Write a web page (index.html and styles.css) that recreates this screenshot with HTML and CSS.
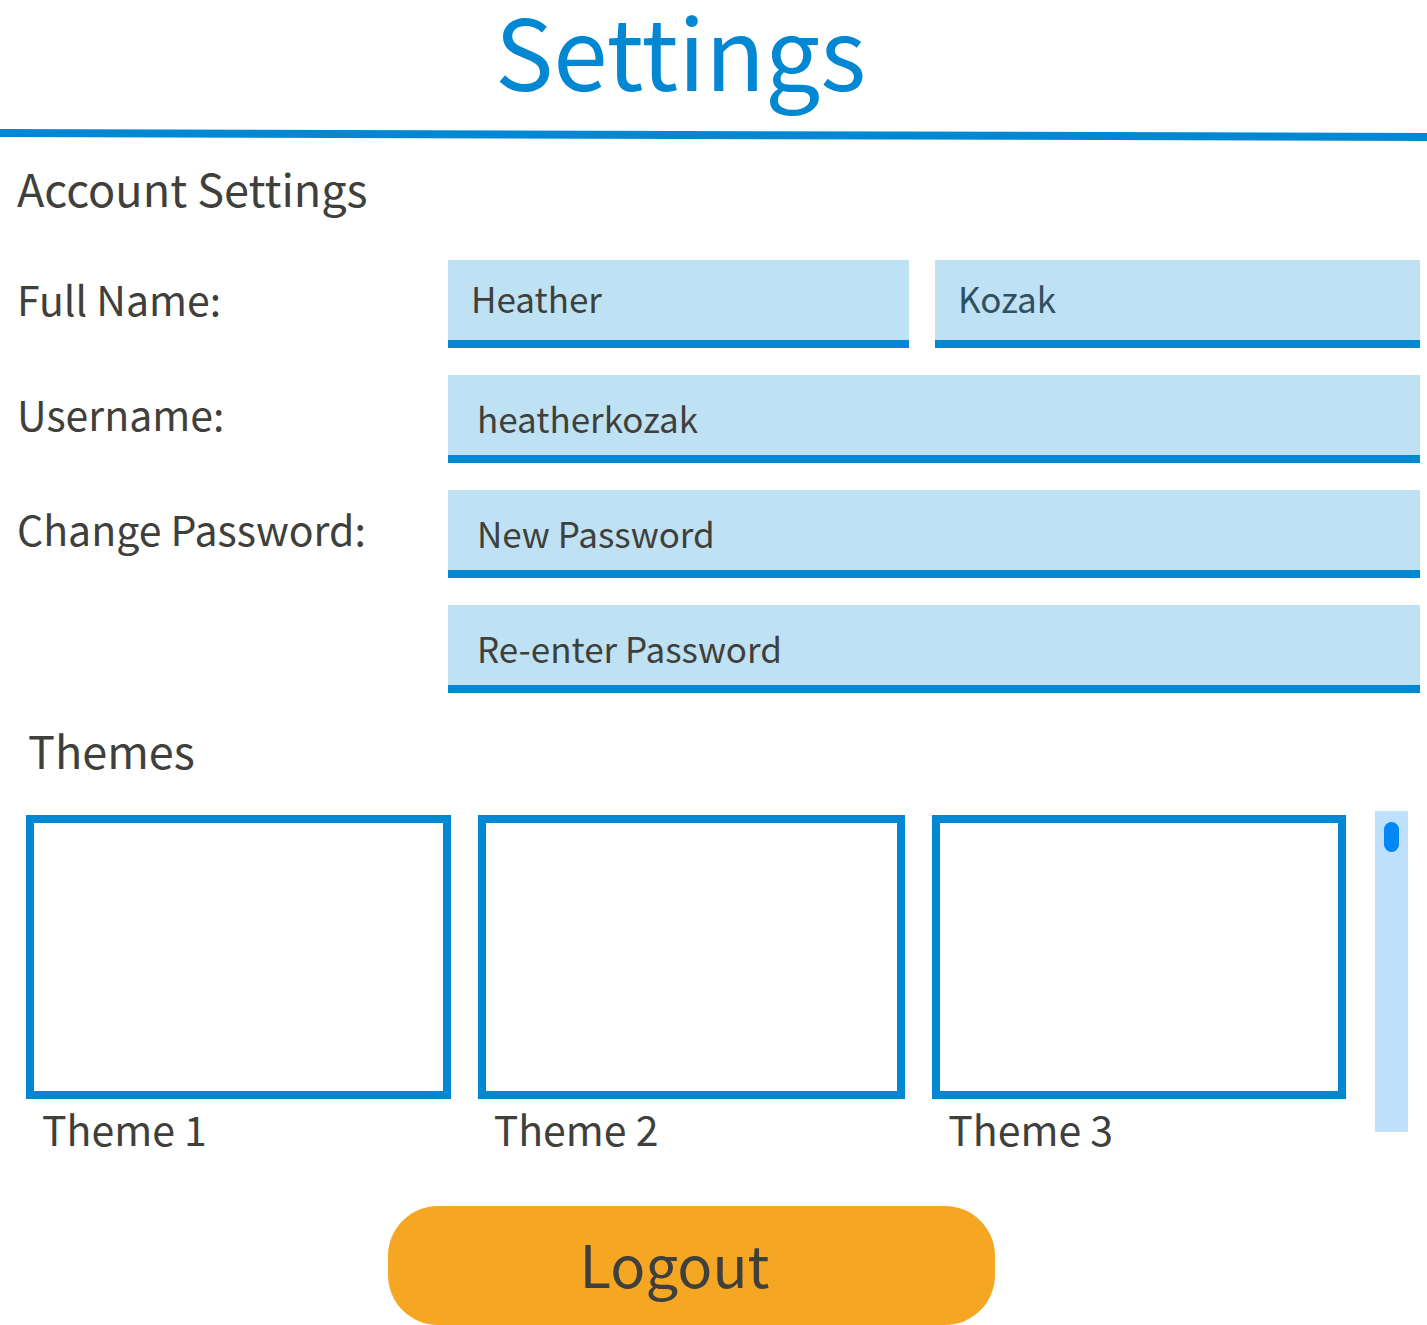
FILE: index.html
```html
<!DOCTYPE html>
<html lang="en">
<head>
<meta charset="utf-8">
<meta name="viewport" content="width=device-width, initial-scale=1">
<title>Settings</title>
<link rel="stylesheet" href="styles.css">
</head>
<body>
<header class="page-header">
  <h1 class="page-title">Settings</h1>
  <div class="header-rule"></div>
</header>
<main>
  <section class="account">
    <h2 class="section-title">Account Settings</h2>
    <form class="account-form">
      <div class="row">
        <label class="row-label" for="first-name">Full Name:</label>
        <div class="name-fields">
          <input class="field field-short" id="first-name" type="text" value="Heather">
          <input class="field field-short field-last" id="last-name" type="text" aria-label="Last name" value="Kozak">
        </div>
      </div>
      <div class="row">
        <label class="row-label" for="username">Username:</label>
        <input class="field" id="username" type="text" value="heatherkozak">
      </div>
      <div class="row">
        <label class="row-label" for="new-password">Change Password:</label>
        <input class="field" id="new-password" type="password" placeholder="New Password">
      </div>
      <div class="row">
        <span></span>
        <input class="field" id="repeat-password" type="password" aria-label="Re-enter Password" placeholder="Re-enter Password">
      </div>
    </form>
  </section>
  <section class="themes">
    <h2 class="section-title themes-title">Themes</h2>
    <div class="themes-body">
      <div class="theme-list">
        <figure class="theme"><div class="theme-preview"></div><figcaption class="theme-name">Theme 1</figcaption></figure>
        <figure class="theme"><div class="theme-preview"></div><figcaption class="theme-name">Theme 2</figcaption></figure>
        <figure class="theme"><div class="theme-preview"></div><figcaption class="theme-name">Theme 3</figcaption></figure>
      </div>
      <div class="scroll-track"><div class="scroll-thumb"></div></div>
    </div>
  </section>
  <div class="actions">
    <button class="logout" type="button">Logout</button>
  </div>
</main>
</body>
</html>
```
FILE: styles.css
```css
* {
  box-sizing: border-box;
}

body {
  margin: 0;
  background: #fff;
  color: #3f3f3b;
  font-family: "Noto Sans CJK SC", "Noto Sans", sans-serif;
  font-weight: 400;
}

h1, h2, figure {
  margin: 0;
  font-weight: 400;
}

.page-title {
  padding: 0 66px 33px 0;
  color: #0288d3;
  font-size: 98px;
  line-height: 96px;
  text-align: center;
}

/* The rule drops slightly from left to right. */
.header-rule {
  height: 12px;
  background: #0288d3;
  clip-path: polygon(0 0, 100% 4px, 100% 100%, 0 8px);
}

.section-title {
  padding-left: 17px;
  font-size: 45px;
  line-height: 60px;
}

.account {
  padding-top: 17px;
}

.account-form {
  display: grid;
  gap: 27px;
  padding: 42px 7px 0 0;
}

.row {
  display: grid;
  grid-template-columns: 448fr 972fr;
}

.row-label {
  padding: 8px 0 0 17px;
  font-size: 41px;
  line-height: 60px;
}

.name-fields {
  display: grid;
  grid-template-columns: 461fr 485fr;
  gap: 26px;
}

.field {
  width: 100%;
  min-width: 0;
  height: 88px;
  margin: 0;
  padding: 4px 29px 0;
  border: 0;
  border-bottom: 8px solid #0288d3;
  border-radius: 0;
  background: #bfe1f4;
  color: #3f3f3b;
  font: inherit;
  font-size: 35px;
  line-height: 56px;
  outline: 0;
}

.field::placeholder {
  color: #3f3f3b;
  opacity: 1;
}

.field-short {
  padding: 0 23px 6px;
}

.field-last {
  color: #2f4f62;
}

.themes {
  padding-top: 27px;
}

.themes-title {
  padding-left: 28px;
}

.themes-body {
  display: flex;
  gap: 29px;
  padding: 31px 19px 0 26px;
}

.theme-list {
  flex: 1;
  display: grid;
  grid-template-columns: 425fr 428fr 414fr;
  gap: 27px;
  padding-top: 4px;
}

.theme-preview {
  height: 284px;
  border: 8px solid #0288d3;
}

.theme-name {
  padding-left: 16px;
  font-size: 41px;
  line-height: 58px;
}

.scroll-track {
  width: 33px;
  height: 321px;
  padding: 11px 9px;
  background: #bfe1fc;
}

.scroll-thumb {
  width: 15px;
  height: 30px;
  border-radius: 8px;
  background: #0288f5;
}

.actions {
  display: flex;
  justify-content: center;
  padding: 49px 44px 0 0;
}

.logout {
  width: 607px;
  height: 119px;
  padding: 0 34px 6px 0;
  border: 0;
  border-radius: 50px;
  background: #f5a623;
  color: #3f3f3b;
  font: inherit;
  font-size: 58px;
  line-height: 80px;
}
```
